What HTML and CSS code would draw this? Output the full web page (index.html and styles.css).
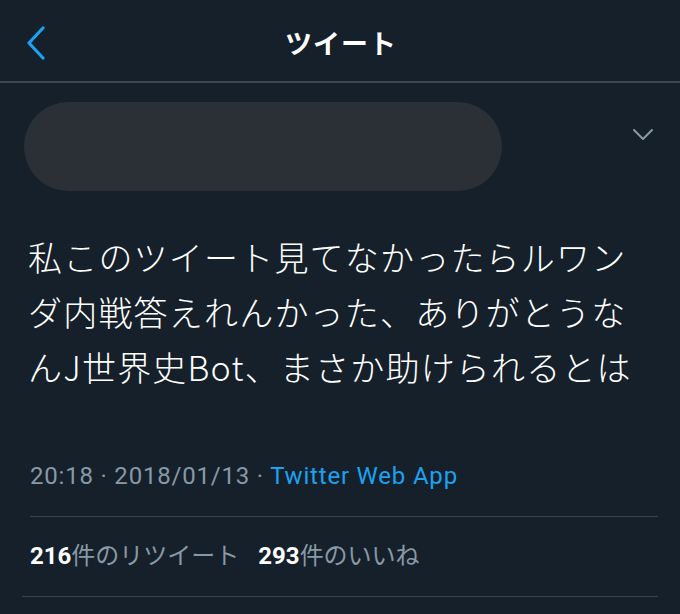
FILE: index.html
```html
<!DOCTYPE html>
<html lang="ja">
<head>
<meta charset="utf-8">
<link rel="stylesheet" href="styles.css">
</head>
<body>
<div class="app">
  <header class="nav">
    <svg class="back" width="24" height="34" viewBox="0 0 24 34"><path d="M18 2 L4 17 L18 32" fill="none" stroke="#1da1f2" stroke-width="3.2" stroke-linecap="round" stroke-linejoin="round"/></svg>
    <h1 class="title">ツイート</h1>
  </header>
  <main class="tweet">
    <div class="author">
      <div class="redacted"></div>
      <svg class="caret" width="22" height="14" viewBox="0 0 22 14"><path d="M2 2 L11 11 L20 2" fill="none" stroke="#8899a6" stroke-width="2" stroke-linecap="round" stroke-linejoin="round"/></svg>
    </div>
    <p class="body">私このツイート見てなかったらルワン<br>ダ内戦答えれんかった、ありがとうな<br>んJ世界史Bot、まさか助けられるとは</p>
    <div class="meta">20:18 · 2018/01/13 · <span class="source">Twitter Web App</span></div>
    <div class="stats">
      <span class="stat"><b>216</b>件のリツイート</span>
      <span class="stat"><b>293</b>件のいいね</span>
    </div>
  </main>
</div>
</body>
</html>
```
FILE: styles.css
```css
html, body {
  margin: 0;
  padding: 0;
  background: #15202b;
}
body {
  width: 680px;
  height: 614px;
  overflow: hidden;
  font-family: "Noto Sans CJK JP", "Noto Sans", sans-serif;
  color: #ffffff;
}
.nav {
  position: relative;
  height: 81px;
  border-bottom: 2px solid #3a4651;
  display: flex;
  align-items: center;
  justify-content: center;
}
.back {
  position: absolute;
  left: 25px;
  top: 26px;
}
.title {
  margin: 0;
  font-size: 27px;
  font-weight: 700;
  letter-spacing: 1px;
  line-height: 1;
  padding-top: 4px;
  padding-left: 2px;
}
.tweet {
  padding: 0 22px;
}
.author {
  display: flex;
  align-items: flex-start;
  justify-content: space-between;
  padding-top: 19px;
}
.redacted {
  margin-left: 2px;
  width: 478px;
  height: 89px;
  border-radius: 45px;
  background: #2b3036;
}
.caret {
  margin-top: 26px;
  margin-right: 4px;
}
.body {
  margin: 38px 0 0 6px;
  font-size: 34px;
  line-height: 55px;
  letter-spacing: 1.2px;
  font-weight: 300;
  white-space: nowrap;
}
.meta {
  margin: 68px 0 0 8px;
  font-family: Roboto, "Noto Sans CJK JP", sans-serif;
  font-size: 24px;
  letter-spacing: 0.8px;
  color: #8899a6;
  padding-bottom: 26px;
  border-bottom: 1px solid #38444d;
}
.source {
  color: #1da1f2;
}
.stats {
  display: flex;
  gap: 19px;
  padding: 19px 0 25px 8px;
  border-bottom: 1px solid #38444d;
  font-family: Roboto, "Noto Sans CJK JP", sans-serif;
  font-size: 24px;
  color: #8899a6;
}
.stat b {
  color: #ffffff;
  font-weight: 700;
}
```
